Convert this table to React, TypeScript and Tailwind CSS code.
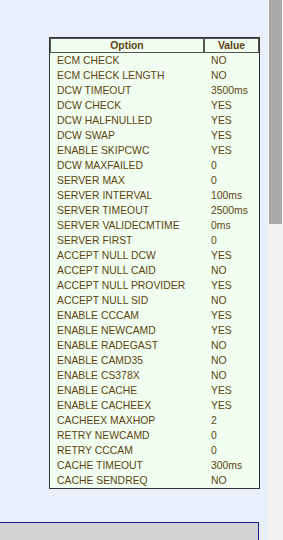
const settings: [string, string][] = [
  ['ECM CHECK', 'NO'],
  ['ECM CHECK LENGTH', 'NO'],
  ['DCW TIMEOUT', '3500ms'],
  ['DCW CHECK', 'YES'],
  ['DCW HALFNULLED', 'YES'],
  ['DCW SWAP', 'YES'],
  ['ENABLE SKIPCWC', 'YES'],
  ['DCW MAXFAILED', '0'],
  ['SERVER MAX', '0'],
  ['SERVER INTERVAL', '100ms'],
  ['SERVER TIMEOUT', '2500ms'],
  ['SERVER VALIDECMTIME', '0ms'],
  ['SERVER FIRST', '0'],
  ['ACCEPT NULL DCW', 'YES'],
  ['ACCEPT NULL CAID', 'NO'],
  ['ACCEPT NULL PROVIDER', 'YES'],
  ['ACCEPT NULL SID', 'NO'],
  ['ENABLE CCCAM', 'YES'],
  ['ENABLE NEWCAMD', 'YES'],
  ['ENABLE RADEGAST', 'NO'],
  ['ENABLE CAMD35', 'NO'],
  ['ENABLE CS378X', 'NO'],
  ['ENABLE CACHE', 'YES'],
  ['ENABLE CACHEEX', 'YES'],
  ['CACHEEX MAXHOP', '2'],
  ['RETRY NEWCAMD', '0'],
  ['RETRY CCCAM', '0'],
  ['CACHE TIMEOUT', '300ms'],
  ['CACHE SENDREQ', 'NO'],
];

export default function App() {
  return (
    <div className="flex h-[540px] w-[283px] overflow-hidden font-['Liberation_Sans',Arial,sans-serif] text-[10.4px] text-[#603f12]">
      <div className="flex w-[268px] flex-col bg-[#eaf0fb] pt-[37px]">
        {/* Settings table */}
        <div className="ml-[49px] w-[211px] border border-[#333] bg-[#f0fff0]">
          <div className="flex h-[15px] font-bold">
            <div className="flex w-[154px] items-center justify-center border border-[#555]">Option</div>
            <div className="flex flex-1 items-center justify-center border border-[#555]">Value</div>
          </div>
          {settings.map(([name, value]) => (
            <div key={name} className="flex h-[15px] items-center leading-[15px]">
              <div className="w-[154px] pl-[7px]">{name}</div>
              <div className="flex-1 pl-[7px]">{value}</div>
            </div>
          ))}
        </div>

        {/* Footer panel */}
        <div className="ml-[-2px] mt-[33px] h-[40px] w-[261px] shrink-0 border border-[#1a1a8c] bg-[#d3d3d3]" />
      </div>

      {/* Scrollbar */}
      <div className="flex w-[15px] bg-[#f1f1f1] pl-px pr-px">
        <div className="h-[224px] w-full bg-[#a8a8a8]" />
      </div>
    </div>
  );
}
